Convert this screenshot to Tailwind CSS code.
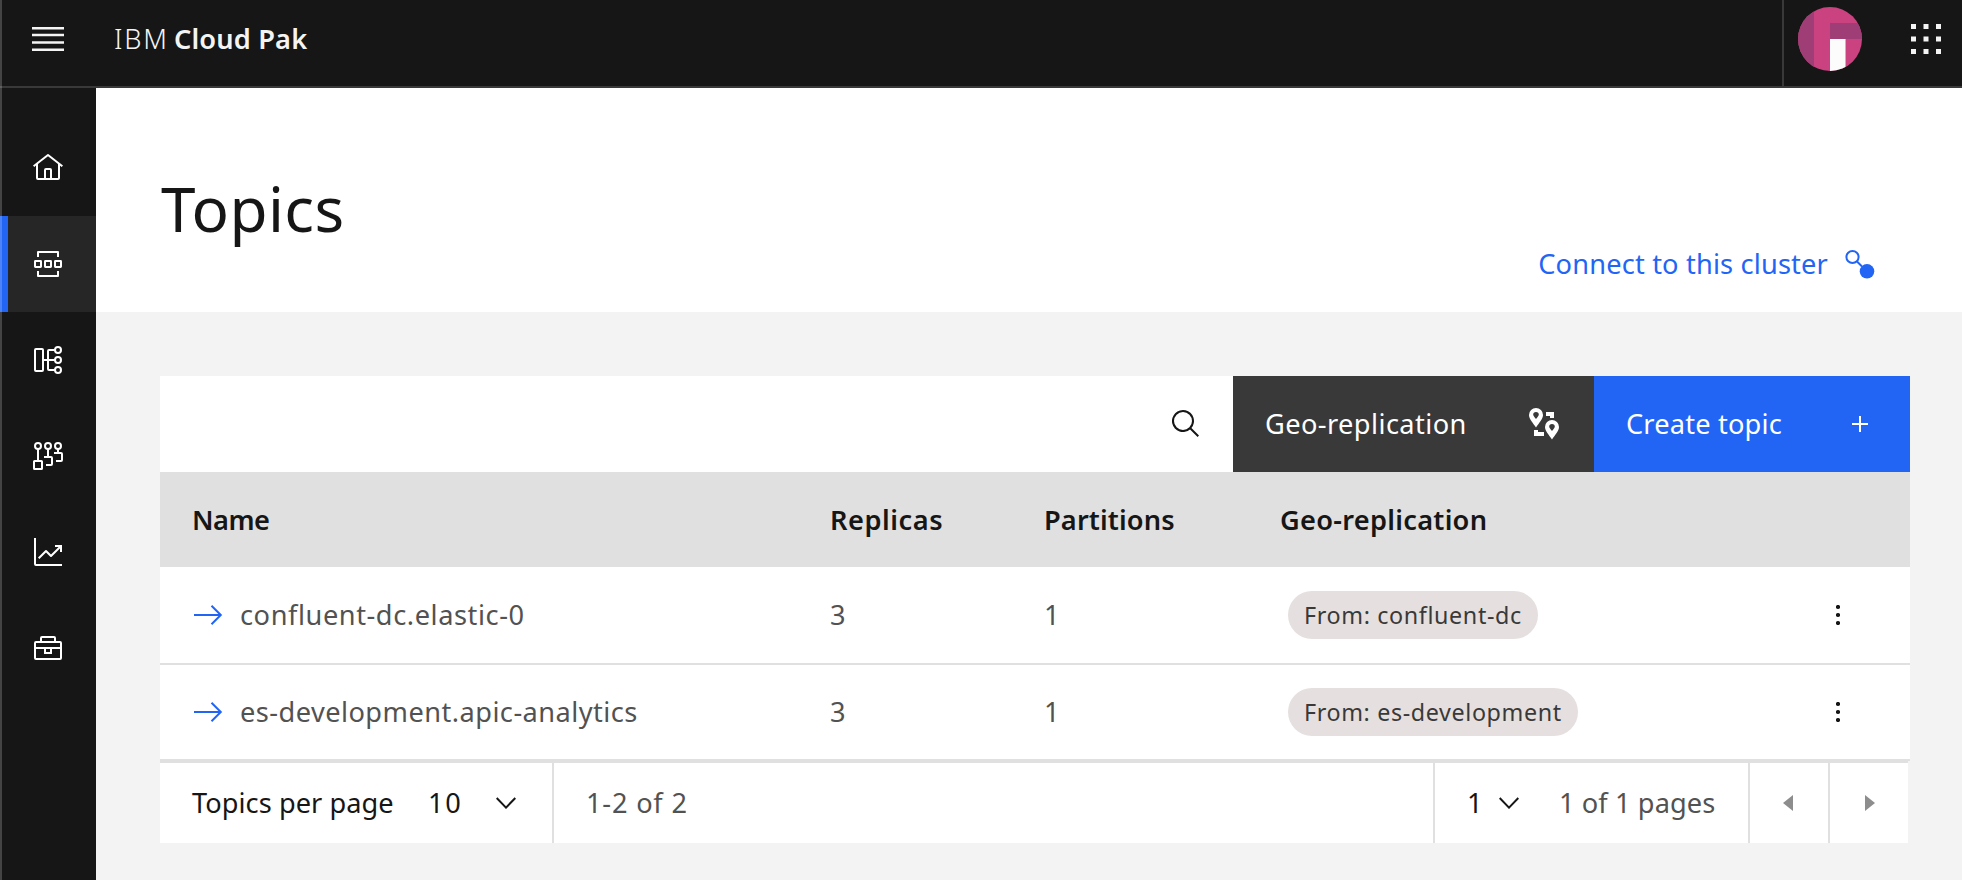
<!DOCTYPE html>
<html lang="en">
<head>
<meta charset="utf-8">
<title>Topics</title>
<script src="https://cdn.jsdelivr.net/npm/@tailwindcss/browser@4"></script>
</head>
<body class="relative flex h-[880px] w-[1962px] flex-col overflow-hidden bg-[#f3f3f3] font-['Noto_Sans','Open_Sans',sans-serif] text-[27.2px] leading-9 text-[#161616]">

<header class="flex h-[88px] shrink-0 border-b-2 border-[#393939] bg-[#161616] text-[#f4f4f4]">
  <div class="flex h-[78px] flex-1 items-center pl-8">
    <svg class="h-8 w-8" viewBox="0 0 32 32" fill="currentColor"><path d="M0 4h32v2.600H0zM0 10.700h32v2.600H0zM0 18.300h32v2.500H0zM0 25.400h32v2.600H0z"/></svg>
    <div class="ml-[50px] flex whitespace-pre"><span class="w-[60px] font-light tracking-[1.8px]">IBM</span><span class="font-semibold tracking-[0.16px]">Cloud Pak</span></div>
  </div>
  <div class="flex h-[86px] w-[180px] border-l-2 border-[#393939]">
    <div class="flex h-[78px] flex-1 items-center justify-between pr-[21px] pl-[14px]">
      <svg class="h-16 w-16 rounded-full" viewBox="0 0 64 64" shape-rendering="crispEdges"><path fill="#ca4280" d="M0 0h64v64H0z"/><path fill="#9f3e76" d="M0 0h16v64H0zM32 16h32v16H32z"/><path fill="#fcfcfc" d="M32 32h15v32H32z"/><path fill="#dca9c1" d="M47 32h1v32h-1z"/></svg>
      <svg class="h-[30px] w-[30px]" viewBox="0 0 30 30" fill="currentColor"><path d="M0 0h5v5H0zM12.5 0h5v5h-5zM25 0h5v5h-5zM0 12.5h5v5H0zM12.5 12.5h5v5h-5zM25 12.5h5v5h-5zM0 25h5v5H0zM12.5 25h5v5h-5zM25 25h5v5h-5z"/></svg>
    </div>
  </div>
</header>

<div class="flex flex-1">
  <nav class="flex w-24 shrink-0 flex-col bg-[#161616] pt-8 text-white">
    <a class="flex h-24 items-center pl-8">
      <svg class="h-8 w-8" viewBox="0 0 32 32" fill="currentColor"><path d="M16.61 2.21a1 1 0 0 0-1.24 0L1 13.42 2.24 15 4 13.62V26a2 2 0 0 0 2 2H26a2 2 0 0 0 2-2V13.63L29.76 15 31 13.43ZM18 26H14V18h4Zm2 0V18a2 2 0 0 0-2-2H14a2 2 0 0 0-2 2v8H6V12.06L16 4.25l10 7.82V26Z"/></svg>
    </a>
    <a class="flex h-24 items-center border-l-8 border-[#2265f5] bg-[#262626] pl-6">
      <svg class="h-8 w-8" viewBox="0 0 32 32" fill="none" stroke="currentColor" stroke-width="2" stroke-linejoin="round"><path d="M6 9V4H26V9M6 23V28H26V23"/><rect x="3" y="13" width="6" height="6" rx=".4"/><rect x="13" y="13" width="6" height="6" rx=".4"/><rect x="23" y="13" width="6" height="6" rx=".4"/></svg>
    </a>
    <a class="flex h-24 items-center pl-8">
      <svg class="h-8 w-8" viewBox="0 0 32 32" fill="none" stroke="currentColor" stroke-width="2"><rect x="3" y="5" width="8" height="22" rx="1"/><path d="M11 16H23M23 6H17a1 1 0 0 0-1 1V25a1 1 0 0 0 1 1H23"/><circle cx="26" cy="6" r="3"/><circle cx="26" cy="16" r="3"/><circle cx="26" cy="26" r="3"/></svg>
    </a>
    <a class="flex h-24 items-center pl-8">
      <svg class="h-8 w-8" viewBox="0 0 32 32" fill="none" stroke="currentColor" stroke-width="2"><circle cx="6" cy="6" r="3"/><circle cx="16" cy="6" r="3"/><circle cx="26" cy="6" r="3"/><rect x="2" y="21" width="8" height="8" rx=".6"/><path d="M6 9V21M16 9V17M12 17H19a1 1 0 0 1 1 1V24a1 1 0 0 1-1 1H14M26 9V13M22 13H29a1 1 0 0 1 1 1V20a1 1 0 0 1-1 1H24"/></svg>
    </a>
    <a class="flex h-24 items-center pl-8">
      <svg class="h-8 w-8" viewBox="0 0 32 32" fill="currentColor"><path d="M4 2H2V28a2 2 0 0 0 2 2H30V28H4ZM30 9H23v2h3.59L19 18.59l-4.29-4.3a1 1 0 0 0-1.42 0L6 21.59 7.41 23 14 16.41l4.29 4.3a1 1 0 0 0 1.42 0L28 12.41V16h2Z"/></svg>
    </a>
    <a class="flex h-24 items-center pl-8">
      <svg class="h-8 w-8" viewBox="0 0 32 32" fill="none" stroke="currentColor" stroke-width="2"><rect x="3" y="10" width="26" height="17" rx="1"/><path d="M9 10V6a1 1 0 0 1 1-1H22a1 1 0 0 1 1 1V10M3 16H29M13 16V21H19V16"/></svg>
    </a>
  </nav>

  <main class="flex flex-1 flex-col">
    <section class="flex h-56 shrink-0 justify-between bg-white pl-[65px]">
      <h1 class="pt-20 text-[62px] leading-20 tracking-[0.4px]">Topics</h1>
      <a class="mr-[87px] mb-[28px] flex h-10 items-center self-end text-[#2265f5]">
        <span class="tracking-[0.17px]">Connect to this cluster</span>
        <svg class="ml-[17px] h-8 w-[30px]" viewBox="0 0 30 32"><circle cx="7.5" cy="9" r="6.1" fill="none" stroke="currentColor" stroke-width="2"/><path d="M12 13.5l5 5" stroke="currentColor" stroke-width="2"/><circle cx="22" cy="23.3" r="7.3" fill="currentColor"/></svg>
      </a>
    </section>

    <section class="flex w-[1814px] flex-col pt-16 pl-16">
      <div class="flex h-24 bg-white">
        <div class="flex flex-1 items-center justify-end pr-[31px]">
          <svg class="h-8 w-8" viewBox="0 0 32 32" fill="currentColor"><path d="M29 27.586l-7.552-7.552a11.018 11.018 0 1 0-1.414 1.414L27.586 29ZM4 13a9 9 0 1 1 9 9A9.010 9.010 0 0 1 4 13Z"/></svg>
        </div>
        <button class="flex w-[361px] items-center justify-between bg-[#393939] pr-[34px] pl-8 text-white">
          <span class="tracking-[0.42px]">Geo-replication</span>
          <svg class="h-8 w-8" viewBox="0 0 32 32" fill="currentColor" fill-rule="evenodd"><path d="M8 0a7 7 0 0 0-7 7c0 4 4 8 7 12.500 3-4.500 7-8.500 7-12.500a7 7 0 0 0-7-7Zm0 4a2.800 2.800 0 0 1 2.800 2.800c0 1-1.300 2.300-2.800 4.200-1.500-1.900-2.800-3.200-2.800-4.200A2.800 2.800 0 0 1 8 4ZM24 12a7 7 0 0 0-7 7c0 4 4 8 7 12.500 3-4.500 7-8.500 7-12.500a7 7 0 0 0-7-7Zm0 4a2.800 2.800 0 0 1 2.800 2.800c0 1-1.300 2.300-2.800 4.200-1.500-1.900-2.800-3.200-2.800-4.200A2.800 2.800 0 0 1 24 16ZM18 4h8v6h-4V8H18ZM6 22h4v2h6v4H6Z"/></svg>
        </button>
        <button class="flex w-[316px] items-center justify-between bg-[#2265f5] pr-[42px] pl-8 text-white">
          <span class="tracking-[0.18px]">Create topic</span>
          <svg class="h-4 w-4" viewBox="0 0 16 16" fill="currentColor"><path d="M7 0h2v7h7v2H9v7H7V9H0V7h7z"/></svg>
        </button>
      </div>

      <div class="grid h-[95px] grid-cols-[638px_214px_236px_1fr] items-center bg-[#e0e0e0] pl-8 font-semibold">
        <span class="tracking-[-0.5px]">Name</span>
        <span class="tracking-[0.55px]">Replicas</span>
        <span class="tracking-[0.14px]">Partitions</span>
        <span class="tracking-[0.28px]">Geo-replication</span>
      </div>

      <div class="grid h-[98px] grid-cols-[638px_214px_236px_1fr] items-center border-b-2 border-[#e0e0e0] bg-white pl-8 text-[#525252]">
        <div class="flex items-center">
          <svg class="h-8 w-8 text-[#2265f5]" viewBox="0 0 32 32" fill="none" stroke="currentColor" stroke-width="2"><path d="M2 16H29M19.500 6.700 28.800 16l-9.300 9.300"/></svg>
          <span class="ml-4 tracking-[0.57px]">confluent-dc.elastic-0</span>
        </div>
        <span>3</span><span>1</span>
        <div class="flex items-center justify-between pr-[70px] pl-2">
          <span class="flex h-12 w-[250px] items-center rounded-full bg-[#e5e0df] pl-4 text-[23.3px] tracking-[0.63px] text-[#393939]">From: confluent-dc</span>
          <svg class="h-5 w-1" viewBox="0 0 4 20" fill="#161616"><circle cx="2" cy="2" r="2.100"/><circle cx="2" cy="10" r="2.100"/><circle cx="2" cy="18" r="2.100"/></svg>
        </div>
      </div>
      <div class="grid h-24 grid-cols-[638px_214px_236px_1fr] items-center border-b-2 border-[#e0e0e0] bg-white pl-8 text-[#525252]">
        <div class="flex items-center">
          <svg class="h-8 w-8 text-[#2265f5]" viewBox="0 0 32 32" fill="none" stroke="currentColor" stroke-width="2"><path d="M2 16H29M19.500 6.700 28.800 16l-9.300 9.300"/></svg>
          <span class="ml-4 tracking-[0.46px]">es-development.apic-analytics</span>
        </div>
        <span>3</span><span>1</span>
        <div class="flex items-center justify-between pr-[70px] pl-2">
          <span class="flex h-12 w-[290px] items-center rounded-full bg-[#e5e0df] pl-4 text-[23.3px] tracking-[0.62px] text-[#393939]">From: es-development</span>
          <svg class="h-5 w-1" viewBox="0 0 4 20" fill="#161616"><circle cx="2" cy="2" r="2.100"/><circle cx="2" cy="10" r="2.100"/><circle cx="2" cy="18" r="2.100"/></svg>
        </div>
      </div>

      <div class="flex h-[82px] w-[1748px] border-t-2 border-[#e0e0e0] bg-white">
        <div class="flex w-[394px] items-center border-r-2 border-[#e0e0e0] pl-8">
          <span class="w-[236px] tracking-[0.05px]">Topics per page</span>
          <span class="w-[68px] tracking-[1.6px]">10</span>
          <svg class="h-3 w-5" viewBox="0 0 20 12" fill="none" stroke="#161616" stroke-width="2"><path d="M.7 1l9.300 9.600L19.300 1"/></svg>
        </div>
        <div class="flex flex-1 items-center pl-8 tracking-[0.8px] text-[#525252]">1-2 of 2</div>
        <div class="flex w-[317px] items-center border-x-2 border-[#e0e0e0] pl-[32px]">
          <span class="w-8">1</span>
          <svg class="h-3 w-5" viewBox="0 0 20 12" fill="none" stroke="#161616" stroke-width="2"><path d="M.7 1l9.300 9.600L19.300 1"/></svg>
          <span class="ml-10 tracking-[0.1px] text-[#525252]">1 of 1 pages</span>
        </div>
        <div class="flex w-20 items-center border-r-2 border-[#e0e0e0] pl-[33px]">
          <svg class="h-4 w-[10px]" viewBox="0 0 10 16" fill="#8d8d8d"><path d="M10 0v16L0 8z"/></svg>
        </div>
        <div class="flex w-[78px] items-center pl-[35px]">
          <svg class="h-4 w-[10px]" viewBox="0 0 10 16" fill="#8d8d8d"><path d="M0 0v16l10-8z"/></svg>
        </div>
      </div>
    </section>
  </main>
</div>

<div class="pointer-events-none absolute inset-y-0 left-0 w-0.5 bg-white/20"></div>
</body>
</html>
